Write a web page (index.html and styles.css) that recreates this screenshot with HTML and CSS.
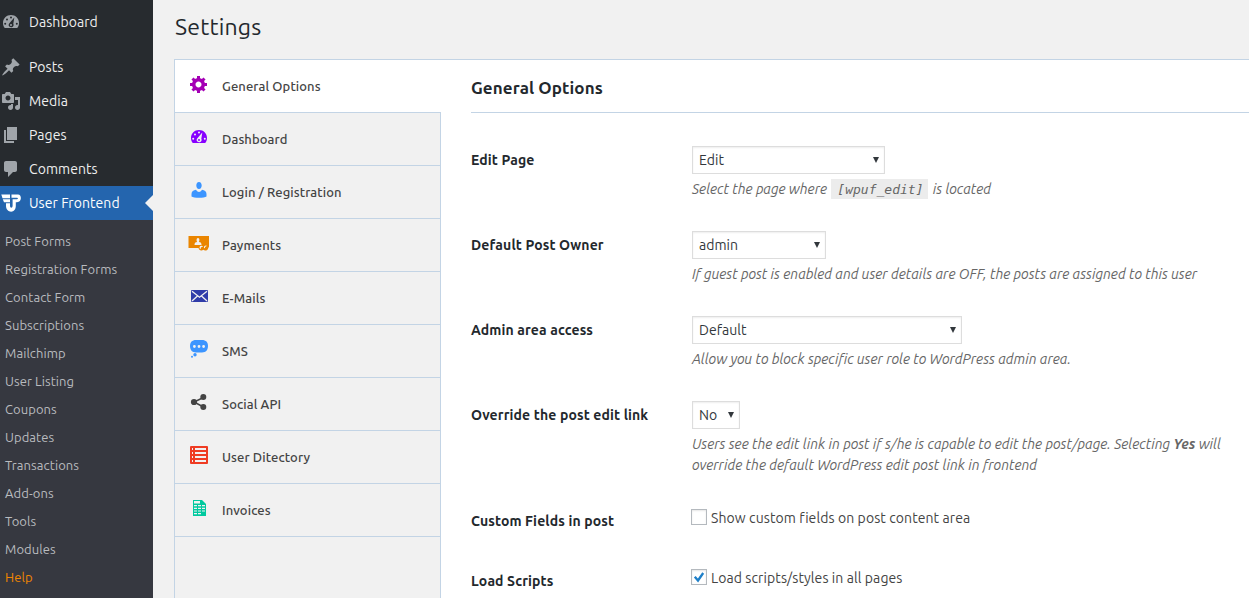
FILE: index.html
```html
<!DOCTYPE html>
<html lang="en">
<head>
<meta charset="utf-8">
<title>Settings</title>
<link rel="stylesheet" href="styles.css">
</head>
<body>
<svg class="defs" width="0" height="0" aria-hidden="true">
<symbol id="gauge" viewBox="0 0 20 20"><path fill-rule="evenodd" d="M3.8 16C2.6 14.500 2 13.100 2 11 2 6.500 5.500 3 10 3s8 3.500 8 8c0 2.100-.6 3.500-1.800 5zM9 5.500a1 1 0 1 0 2 0 1 1 0 1 0-2 0M5 7.500a1 1 0 1 0 2 0 1 1 0 1 0-2 0M3.200 11.800a1 1 0 1 0 2 0 1 1 0 1 0-2 0M14.800 11.800a1 1 0 1 0 2 0 1 1 0 1 0-2 0M13.300 5.500l-1 6.200c1 2-.5 3.500-2.200 3.500-2 0-3.200-2-1.900-3.700zM9 13a1 1 0 1 0 2 0 1 1 0 1 0-2 0"/></symbol>
</svg>
<div class="app">
<nav class="sidebar">
  <ul class="menu">
    <li class="dash"><svg viewBox="0 0 20 20"><use href="#gauge"/></svg><span>Dashboard</span></li>
    <li><svg viewBox="0 0 20 20"><path d="M10.440 3.020l1.820-1.820 6.360 6.350-1.830 1.820c-1.050-.68-2.480-.57-3.410.36l-.75.75c-.92.93-1.040 2.350-.35 3.410l-1.830 1.820-2.410-2.410-2.800 2.790c-.42.42-3.380 2.710-3.800 2.290s1.860-3.390 2.280-3.810l2.790-2.790L4.100 9.360l1.830-1.820c1.050.69 2.480.57 3.400-.36l.75-.75c.93-.92 1.050-2.350.36-3.410z"/></svg><span>Posts</span></li>
    <li><svg viewBox="0 0 20 20"><path d="M13 11V4c0-.55-.45-1-1-1h-1.670L9 1H5L3.670 3H2c-.55 0-1 .45-1 1v7c0 .55.45 1 1 1h10c.55 0 1-.45 1-1zM7 4.500c1.380 0 2.500 1.120 2.500 2.500S8.380 9.500 7 9.500 4.500 8.380 4.500 7 5.620 4.500 7 4.500zM14 6h5v10.500c0 1.380-1.120 2.500-2.500 2.500S14 17.880 14 16.500s1.120-2.500 2.500-2.500c.17 0 .34.02.5.05V9h-3V6zm-4 8.050V13h2v3.500c0 1.380-1.120 2.500-2.500 2.500S7 17.880 7 16.500 8.120 14 9.500 14c.17 0 .34.02.5.05z"/></svg><span>Media</span></li>
    <li><svg viewBox="0 0 20 20"><path d="M6 15V2h10v13H6zm-1 1h8v2H3V5h2v11z"/></svg><span>Pages</span></li>
    <li><svg viewBox="0 0 20 20"><path d="M5 2h9c1.100 0 2 .9 2 2v7c0 1.100-.9 2-2 2h-2l-5 5v-5H5c-1.100 0-2-.9-2-2V4c0-1.100.9-2 2-2z"/></svg><span>Comments</span></li>
    <li class="current"><svg viewBox="0 0 20 20"><path d="M.3 1.500H9v3.800H1.500zM1.800 6.300H9v3H3zM10.500 1.500H17c4 0 4 7.800-1 7.800h-1.500V6.300H16c1.200 0 1.200-1.500 0-1.500h-5.500zM5 10.200h4v2.500c0 2.600 2.600 2.600 2.600 0V6.300h3.200v6.500c0 3.600-2 5.900-4.700 5.900S5 16.400 5 12.800z"/></svg><span>User Frontend</span></li>
  </ul>
  <ul class="submenu">
    <li>Post Forms</li><li>Registration Forms</li><li>Contact Form</li><li>Subscriptions</li><li>Mailchimp</li><li>User Listing</li><li>Coupons</li><li>Updates</li><li>Transactions</li><li>Add-ons</li><li>Tools</li><li>Modules</li><li class="help">Help</li>
  </ul>
</nav>
<main class="content">
  <h1>Settings</h1>
  <div class="panel">
    <ul class="tabs">
      <li class="active"><svg class="c-gear" viewBox="0 0 20 20"><path d="M18 12h-2.180c-.17.7-.44 1.350-.81 1.930l1.540 1.540-2.100 2.100-1.540-1.540c-.58.36-1.230.63-1.910.79V19H8v-2.180c-.68-.16-1.330-.43-1.910-.79l-1.540 1.540-2.120-2.120 1.540-1.540c-.36-.58-.63-1.230-.79-1.910H1V9.030h2.170c.16-.7.44-1.350.8-1.940L2.430 5.550l2.100-2.100 1.540 1.540c.58-.37 1.240-.64 1.930-.81V2h3v2.180c.68.16 1.330.43 1.910.79l1.540-1.540 2.120 2.120-1.540 1.540c.36.59.64 1.240.8 1.940H18V12zm-8.500 1.500c1.660 0 3-1.340 3-3s-1.340-3-3-3-3 1.340-3 3 1.340 3 3 3z"/></svg><span>General Options</span></li>
      <li><svg class="c-gauge" viewBox="0 0 20 20"><use href="#gauge"/></svg><span>Dashboard</span></li>
      <li><svg class="c-user" viewBox="0 .5 20 20"><path d="M10 9.500C8.300 9.500 7.300 7.900 7.300 6S8.300 2.500 10 2.500 12.700 4.100 12.700 6 11.700 9.500 10 9.500zM2.500 17v-2.500c0-2.500 2-4 4.500-4.200 1 1.600 2 2.100 3 2.100s2-.5 3-2.100c2.500.2 4.500 1.700 4.500 4.200V17c-2 1.800-13 1.800-15 0z"/></svg><span>Login / Registration</span></li>
      <li><svg class="c-pay" viewBox="0 1 20 20"><path d="M-.5 4H20v10.500l-.7 1.500a3 3 0 0 1-5 1.800A3 3 0 0 1 9.500 16H-.5z"/><path fill="#f1f1f1" d="M9 6c1.800 0 1.600 3 .8 4 2 .3 2.700 1 2.700 3h-7c0-2 .7-2.700 2.700-3-.8-1-1-4 .8-4zM10.500 15.500a2 2 0 0 1 3.500-1l-.8.5a1.200 1.200 0 0 0-1.400 1.700l-.8.5zM15 16a2 2 0 0 1 2.500-2.500v.8A1.500 1.500 0 0 0 16 16.300z"/></svg><span>Payments</span></li>
      <li><svg class="c-mail" viewBox="0 0 20 20"><rect x="2" y="4" width="17" height="12" rx="1"/><path fill="none" stroke="#f1f1f1" stroke-width="1.300" d="M3 5.200l7.500 6 7.500-6M3 15l5.500-5M18 15l-5.500-5"/></svg><span>E-Mails</span></li>
      <li><svg class="c-sms" viewBox="0 .5 20 20"><path fill-rule="evenodd" d="M7 1.500h6c4 0 6 2.300 6 6s-2 6.500-6 6.500H7c-4 0-6-2.800-6-6.500s2-6 6-6zM4 8a1.400 1.400 0 1 0 2.800 0A1.400 1.400 0 1 0 4 8M8.600 8a1.400 1.400 0 1 0 2.800 0 1.400 1.400 0 1 0-2.800 0M13.200 8A1.400 1.400 0 1 0 16 8a1.400 1.400 0 1 0-2.800 0"/><circle cx="6" cy="16.300" r="1.700"/><circle cx="3" cy="18.300" r="1"/></svg><span>SMS</span></li>
      <li><svg class="c-share" viewBox="0 0 20 20"><path fill="none" stroke="#444" stroke-width="1.500" d="M14.500 5.500L5 10l9.500 5"/><circle cx="14.300" cy="5" r="3"/><circle cx="5" cy="10" r="3.100"/><circle cx="14.300" cy="15" r="3"/></svg><span>Social API</span></li>
      <li><svg class="c-list" viewBox="0 0 20 20"><path fill-rule="evenodd" d="M2 1h16q1 0 1 1v16q0 1-1 1H2q-1 0-1-1V2q0-1 1-1zM3 3h1v2H3zm3 0h11v2H6zM3 7h1v2H3zm3 0h11v2H6zM3 11h1v2H3zm3 0h11v2H6zM3 15h1v2H3zm3 0h11v2H6z"/></svg><span>User Ditectory</span></li>
      <li><svg class="c-inv" viewBox="0 0 20 20"><path fill-rule="evenodd" d="M4 2h9l4 4v12H4zM5 3v2.500h6V3zM5 7v1.200h3V7zm4 0v1.200h3V7zm4 0v1.200h3V7zM5 9.700v1.200h3V9.700zm4 0v1.200h3V9.700zm4 0v1.200h3V9.700zM5 12.400v1.200h3v-1.200zm4 0v1.200h3v-1.200zm4 0v1.200h3v-1.200zM5 15.100v1.200h3v-1.200zm4 0v1.200h3v-1.200z"/></svg><span>Invoices</span></li>
    </ul>
    <section class="form">
      <h2>General Options</h2>
      <div class="row"><div class="label">Edit Page</div><div class="field"><div class="select w193"><span>Edit</span><i></i></div><p>Select the page where <code>[wpuf_edit]</code> is located</p></div></div>
      <div class="row"><div class="label">Default Post Owner</div><div class="field"><div class="select w134"><span>admin</span><i></i></div><p>If guest post is enabled and user details are OFF, the posts are assigned to this user</p></div></div>
      <div class="row"><div class="label">Admin area access</div><div class="field"><div class="select w270"><span>Default</span><i></i></div><p>Allow you to block specific user role to WordPress admin area.</p></div></div>
      <div class="row tall"><div class="label">Override the post edit link</div><div class="field"><div class="select w48"><span>No</span><i></i></div><p>Users see the edit link in post if s/he is capable to edit the post/page. Selecting <b>Yes</b> will<br>override the default WordPress edit post link in frontend</p></div></div>
      <div class="row check"><div class="label">Custom Fields in post</div><div class="option"><span class="box"></span><span>Show custom fields on post content area</span></div></div>
      <div class="row check"><div class="label">Load Scripts</div><div class="option"><span class="box"><svg viewBox="0 0 14 14"><path d="M2.800 6.700l3.200 3.800 5.200-7.500" fill="none" stroke="#1e7fc8" stroke-width="2.300"/></svg></span><span>Load scripts/styles in all pages</span></div></div>
    </section>
  </div>
</main>
</div>
</body>
</html>
```

FILE: styles.css
```css
* { box-sizing: border-box; }
body { margin: 0; background: #f1f1f1; color: #444; font-family: Ubuntu, "Noto Sans", sans-serif; font-size: 14px; overflow: hidden; }
ul, p, h1, h2 { margin: 0; padding: 0; list-style: none; }
.defs { display: none; }
.app { display: flex; width: 1249px; height: 598px; overflow: hidden; }
span, .label, p, li, h1, h2 { white-space: nowrap; }

.sidebar { width: 153px; flex: none; background: #363840; }
.menu { background: #272b2f; padding-top: 5px; }
.menu li { display: flex; align-items: center; gap: 8px; height: 34px; padding-left: 1px; color: #eee; letter-spacing: .06px; }
.menu .dash { margin-bottom: 11px; }
.menu svg { width: 20px; height: 20px; fill: #a0a5aa; }
.menu .current { background: #2465ae; color: #fff; position: relative; }
.menu .current svg { fill: #fff; }
.menu .current::after { content: ""; position: absolute; right: 0; top: 9px; border: 8px solid transparent; border-left: 0; border-right-color: #f1f1f1; }
.submenu { padding-top: 7px; }
.submenu li { height: 28px; line-height: 28px; padding-left: 5px; font-size: 13px; color: #b9bbbf; letter-spacing: .08px; }
.submenu .help { color: #f18500; }

.content { flex: 1; min-width: 0; padding-left: 21px; display: flex; flex-direction: column; }
h1 { height: 59px; flex: none; padding-top: 12px; padding-left: 1px; line-height: 29px; font-size: 23px; font-weight: 400; color: #23282d; letter-spacing: .2px; }
.panel { flex: 1; min-height: 0; display: flex; background: #fff; border: solid #c3d4e5; border-width: 1px 0 0 1px; }
.tabs { width: 266px; flex: none; background: #f1f1f1; border-right: 1px solid #c3d4e5; }
.tabs li { height: 53px; display: flex; padding-left: 14px; gap: 13px; border-bottom: 1px solid #c3d4e5; font-size: 13px; line-height: 52px; font-weight: 500; color: #444; letter-spacing: .11px; }
.tabs .active { background: #fff; margin-right: -1px; }
.tabs svg { width: 20px; height: 20px; margin-top: 14px; overflow: visible; }
.c-gear { fill: #a400b5; } .c-gauge { fill: #8700ff; } .c-user { fill: #3c95ff; } .c-pay { fill: #ea8500; }
.c-mail { fill: #303ca9; } .c-sms { fill: #3c95ff; } .c-share { fill: #444; } .c-list { fill: #ef3c23; } .c-inv { fill: #00c99e; }

.form { flex: 1; min-width: 0; padding-left: 30px; }
h2 { height: 53px; line-height: 56px; border-bottom: 1px solid #c3d4e5; margin-bottom: 33px; font-size: 17px; font-weight: 700; color: #23282d; letter-spacing: .1px; }
.row { display: flex; height: 85px; }
.label { width: 221px; flex: none; line-height: 28px; font-weight: 700; color: #23282d; letter-spacing: .13px; }
.select { height: 28px; display: flex; align-items: center; justify-content: space-between; border: 1px solid #ddd; box-shadow: inset 0 1px 2px rgba(0,0,0,.07); padding: 0 5px 0 6px; color: #32373c; letter-spacing: .05px; }
.select i { border: 3px solid transparent; border-top: 6px solid #32373c; border-bottom: 0; }
.w193 { width: 193px; } .w134 { width: 134px; } .w270 { width: 270px; } .w48 { width: 48px; }
.field p { margin-top: 5px; line-height: 21px; font-style: italic; color: #666; letter-spacing: .01px; }
code { font: italic 13px/20px "DejaVu Sans Mono", monospace; background: #ececec; padding: 3px 5px 2px 6px; margin: 0 1px; letter-spacing: 0; }
.tall { height: 106px; }
.check { height: 60px; }
.option { display: flex; gap: 4px; margin-left: -1px; height: 22px; align-items: center; letter-spacing: .09px; }
.box { width: 16px; height: 16px; border: 1px solid #b4b9be; background: #fff; box-shadow: inset 0 1px 2px rgba(0,0,0,.1); margin-bottom: 2px; }
.box svg { display: block; width: 14px; height: 14px; }
```
